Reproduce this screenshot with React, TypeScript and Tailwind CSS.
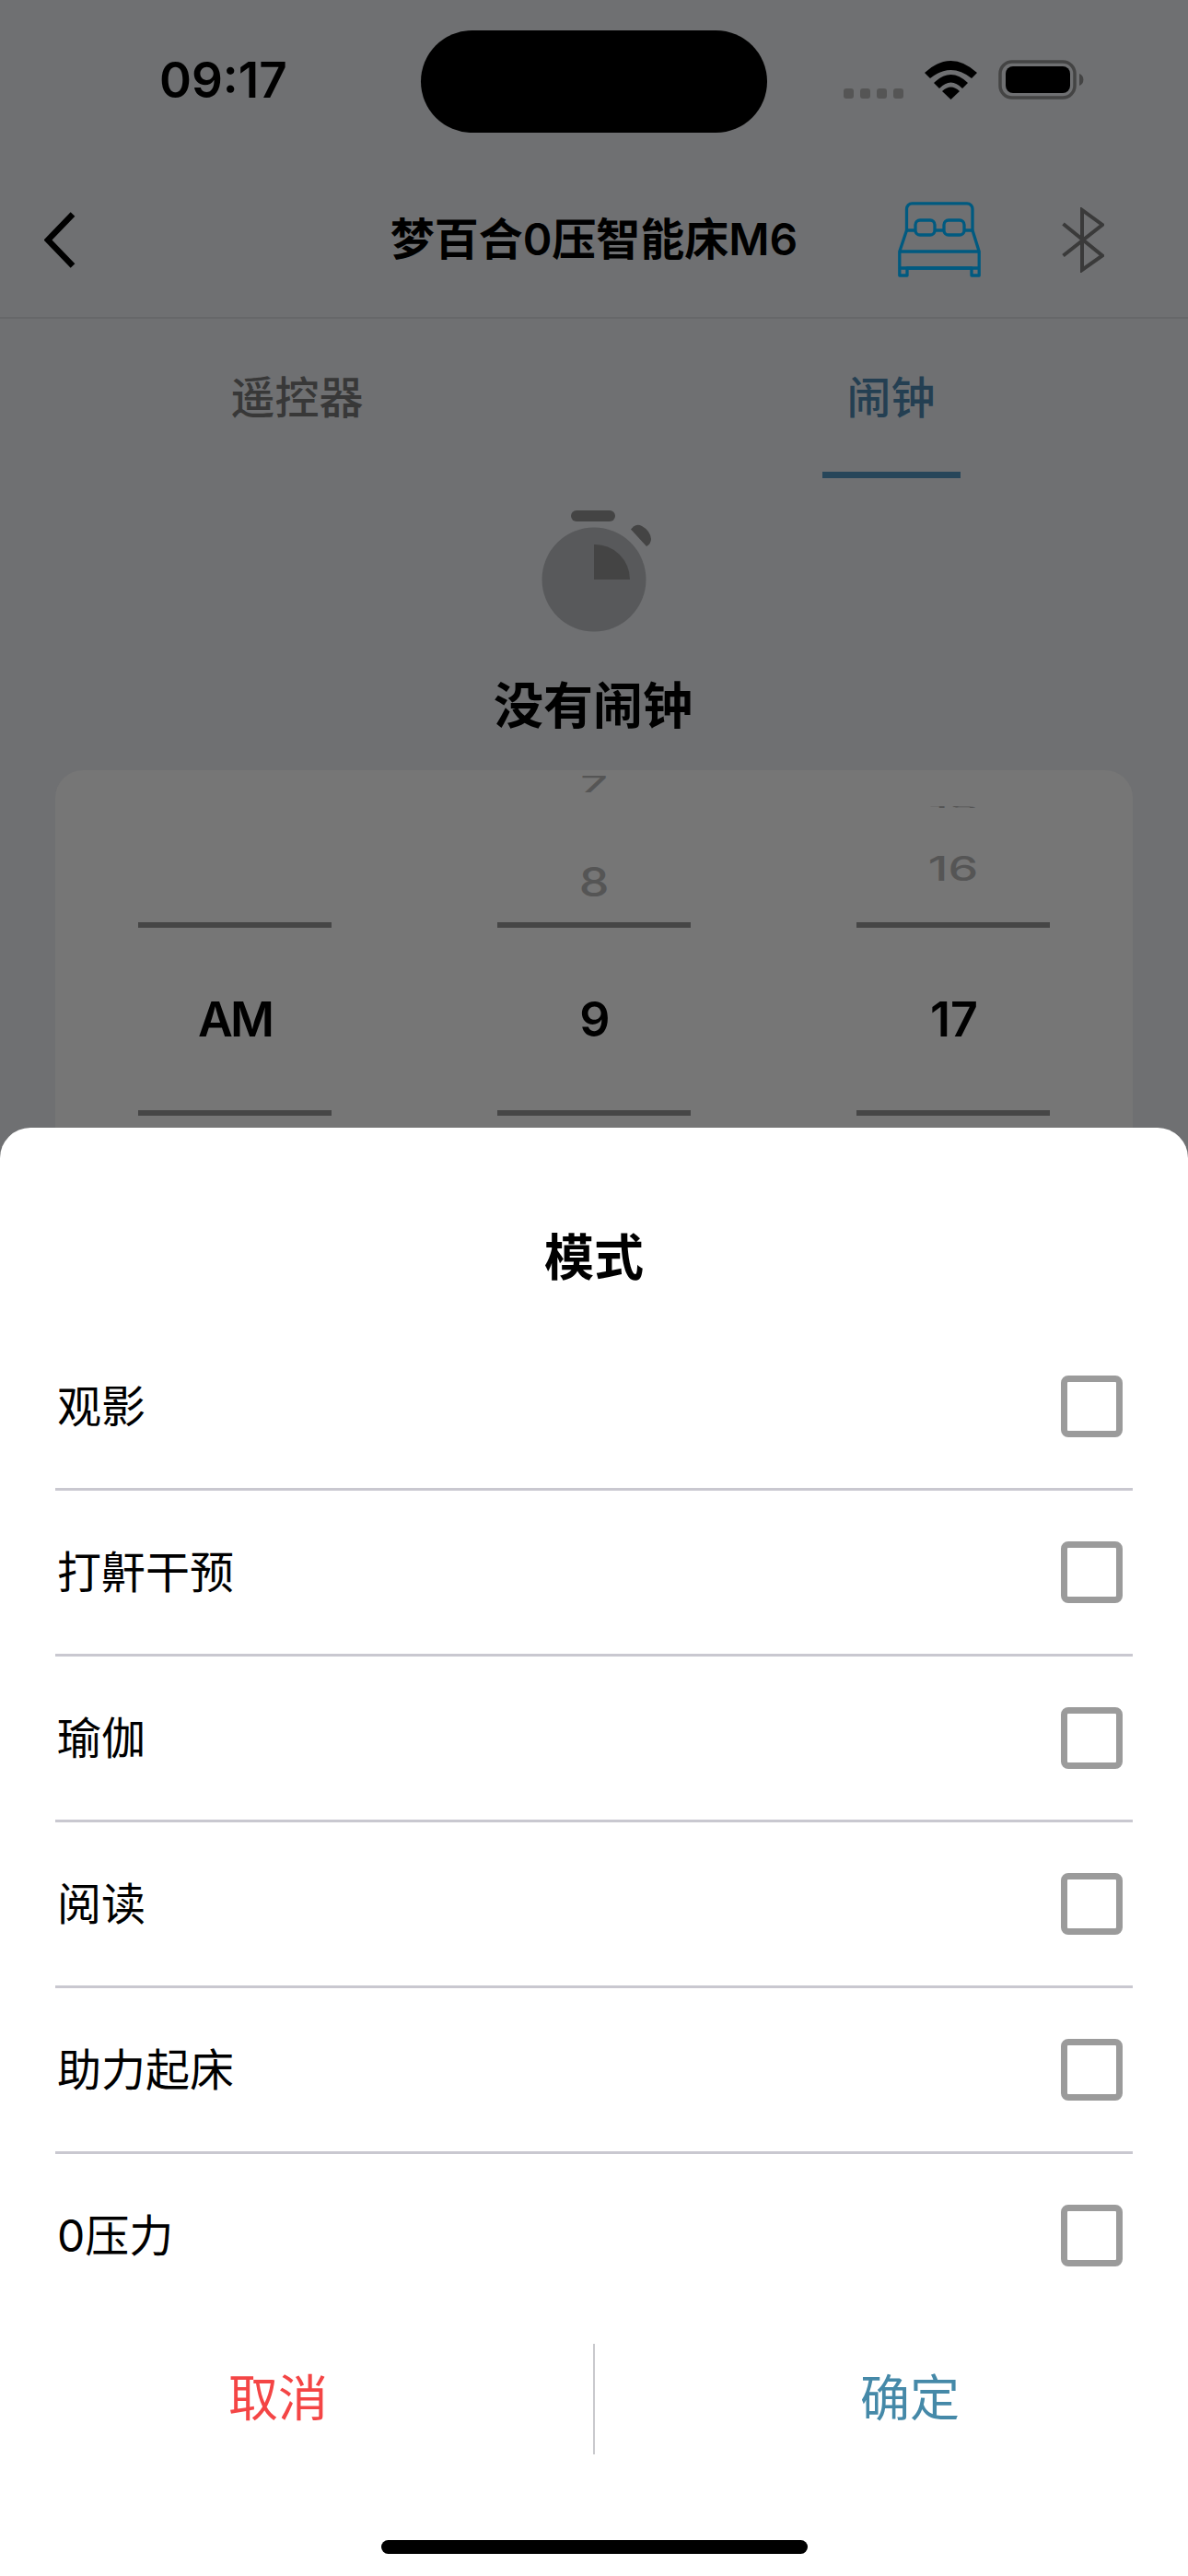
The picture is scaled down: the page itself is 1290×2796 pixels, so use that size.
import React from "react";

const modes = ["观影", "打鼾干预", "瑜伽", "阅读", "助力起床", "0压力"];

const BedIcon = () => (
  <svg width="90" height="82" viewBox="0 0 90 82" fill="none" stroke="#005a80" strokeWidth="3.3" strokeLinejoin="round">
    <path d="M9.5 31V8a6 6 0 0 1 6-6.2H75a6 6 0 0 1 6 6.2V31" />
    <rect x="19" y="20" width="21" height="16" rx="5" />
    <rect x="50" y="20" width="22" height="16" rx="5" />
    <path d="M9.5 31H19M40 31H50M72 31H81" />
    <path d="M9.5 31L1.8 54V80H10V72H80V80H88.2V54L81 31" />
    <path d="M1.8 54H88.2M1.8 72H88.2" />
  </svg>
);

const BluetoothIcon = () => (
  <svg width="46" height="71" viewBox="0 0 46 71" fill="none" stroke="#3a3a3a" strokeWidth="4">
    <polyline points="1.5,18 44,52.5 22,68 22,3 44,19 1.5,52.5" />
  </svg>
);

const WifiIcon = () => (
  <svg width="57" height="42" viewBox="0 0 57 42" fill="#000">
    <path d="M0 13Q28.5 -13 57 13L51 19Q28.5 1 6 19Z" />
    <path d="M10 24Q28.5 6 47 24L41 30Q28.5 17 16 30Z" />
    <path d="M19 33Q28.5 24 38 33L28.5 42Z" />
  </svg>
);

const BatteryIcon = () => (
  <svg width="93" height="43" viewBox="0 0 93 43">
    <rect x="2" y="2" width="81" height="39" rx="13" fill="none" stroke="#444" strokeWidth="3.5" />
    <rect x="8" y="7" width="70" height="29" rx="8" fill="#000" />
    <path d="M88 15a7 7 0 0 1 0 13Z" fill="#444" />
  </svg>
);

const StopwatchIcon = () => (
  <svg width="140" height="140" viewBox="0 0 140 140">
    <circle cx="70" cy="80" r="56.5" fill="#58595b" />
    <rect x="45" y="5" width="48" height="12" rx="6" fill="#444" />
    <path d="M70 42A38 38 0 0 1 109 80H70Z" fill="#444" />
    <path d="M110 25.5L113 22.5Q117 19.5 122 22Q131 27 132 36Q132 41 127 44Z" fill="#444" />
  </svg>
);

const WheelLine = () => <div className="h-[6px] w-full bg-[#464646]" />;

const WheelColumn = (props: { above?: React.ReactNode; value: string; valueClass?: string }) => (
  <div className="flex w-[210px] flex-col items-center">
    <div className="flex h-[165px] w-full flex-col items-center">{props.above}</div>
    <WheelLine />
    <div className="flex h-[198px] w-full items-center justify-center pl-[2px] pt-[2px] text-[52px] font-[570] leading-[60px] text-black">
      <span className={props.valueClass}>{props.value}</span>
    </div>
    <WheelLine />
  </div>
);

export default function App() {
  return (
    <div
      className="relative h-[2796px] w-[1290px] overflow-hidden bg-[#6f7072]"
      style={{ fontFamily: 'Inter, "Noto Sans CJK SC", sans-serif' }}
    >
      {/* status bar */}
      <div className="flex h-[176px] items-start">
        <div className="w-[457px] pl-[173px] pt-[57px] text-[53px] font-semibold leading-[60px] text-black">09:17</div>
        <div className="mt-[33px] h-[111px] w-[376px] rounded-full bg-black" />
        <div className="ml-[83px] flex items-end pt-[65px]">
          <div className="mb-px flex gap-[7px]">
            <div className="h-[11px] w-[11px] rounded-[3px] bg-[#555]" />
            <div className="h-[11px] w-[11px] rounded-[3px] bg-[#555]" />
            <div className="h-[11px] w-[11px] rounded-[3px] bg-[#555]" />
            <div className="h-[11px] w-[11px] rounded-[3px] bg-[#555]" />
          </div>
          <div className="ml-[23px] mr-[23px] flex">
            <WifiIcon />
          </div>
          <BatteryIcon />
        </div>
      </div>

      {/* nav */}
      <div className="grid h-[170px] grid-cols-[1fr_auto_1fr] items-center border-b-2 border-[#666769]">
        <div className="pl-[48px]">
          <svg width="34" height="61" viewBox="0 0 34 61" fill="none" stroke="#000" strokeWidth="6.5" className="block">
            <polyline points="31,2.5 4,30.5 31,58.5" />
          </svg>
        </div>
        <div className="text-[48px] font-semibold leading-[60px] text-black">梦百合0压智能床M6</div>
        <div className="flex items-center justify-end pr-[91px]">
          <BedIcon />
          <div className="ml-[88px] flex">
            <BluetoothIcon />
          </div>
        </div>
      </div>

      {/* tabs */}
      <div className="grid grid-cols-2">
        <div className="flex flex-col items-center">
          <div className="mt-[56px] text-[48px] font-medium leading-[60px] text-[#383838]">遥控器</div>
        </div>
        <div className="flex flex-col items-center">
          <div className="mt-[56px] text-[48px] font-medium leading-[60px] text-[#243f52]">闹钟</div>
          <div className="mt-[50px] h-[7px] w-[150px] bg-[#27465a]" />
        </div>
      </div>

      {/* empty state */}
      <div className="flex flex-col items-center">
        <div className="mt-[30px] flex">
          <StopwatchIcon />
        </div>
        <div className="mt-[48px] pr-[2px] text-[54px] font-semibold leading-[60px] text-black">没有闹钟</div>
      </div>

      {/* time wheel */}
      <div className="mx-[60px] mt-[39px] flex h-[500px] gap-[180px] overflow-hidden rounded-[30px] bg-[#767676] pl-[90px]">
        <WheelColumn value="AM" valueClass="pr-[2px] tracking-[-3px]" />
        <WheelColumn
          value="9"
          above={
            <>
              <div className="mt-px h-[30px] scale-y-[0.47] text-[52px] font-medium leading-[30px] text-[#555]">7</div>
              <div className="mt-[61px] h-[60px] scale-y-[0.84] text-[52px] font-medium leading-[60px] text-[#555]">8</div>
            </>
          }
        />
        <WheelColumn
          value="17"
          above={
            <>
              <div className="mt-[35px] h-[10px] scale-y-[0.05] text-[52px] font-medium leading-[10px] text-[#555]">15</div>
              <div className="mt-[32px] h-[60px] scale-y-[0.71] text-[52px] font-medium leading-[60px] text-[#555]">16</div>
            </>
          }
        />
      </div>

      {/* mode sheet */}
      <div className="absolute inset-x-0 bottom-0 flex h-[1572px] flex-col rounded-t-[33px] bg-white">
        <div className="pb-[42px] pt-[112px] text-center text-[54px] font-semibold leading-[60px] text-black">模式</div>
        <div className="px-[60px]">
          {modes.map((mode, i) => (
            <div
              key={mode}
              className={
                i === modes.length - 1
                  ? "flex h-[180px] items-center justify-between border-b-[3px] border-transparent pr-[11px]"
                  : "flex h-[180px] items-center justify-between border-b-[3px] border-[#c9c8d0] pr-[11px]"
              }
            >
              <span className="pl-[2px] text-[48px] leading-[60px] text-black">{mode}</span>
              <div className="h-[67px] w-[67px] rounded-[8px] border-[7px] border-[#9b9b9b]" />
            </div>
          ))}
        </div>
        <div className="mt-[26px] flex h-[120px] items-center">
          <div className="flex-1 pr-[40px] text-center text-[54px] leading-[60px] text-[#f44545]">取消</div>
          <div className="h-full w-[2px] bg-[#c9c9cd]" />
          <div className="flex-1 pl-[40px] text-center text-[54px] leading-[60px] text-[#4589a8]">确定</div>
        </div>
        <div className="mt-[93px] flex justify-center">
          <div className="h-[15px] w-[463px] rounded-full bg-black" />
        </div>
      </div>
    </div>
  );
}
